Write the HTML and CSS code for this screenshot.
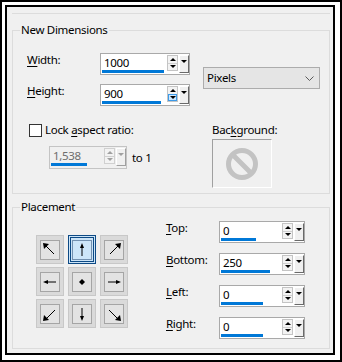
FILE: index.html
```html
<!DOCTYPE html>
<html>
<head>
<meta charset="utf-8">
<link rel="stylesheet" href="styles.css">
</head>
<body>
<div class="frame">
  <div class="dialog">
    <div class="prev"></div>

    <section class="group dims">
      <div class="title">New Dimensions</div>
      <div class="dims-top">
        <div class="size-rows">
          <div class="row">
            <span class="lbl"><u>W</u>idth:</span>
            <div class="spin">
              <div class="field"><span class="val">1000</span><div class="track"><div class="bar" style="width:62px"></div></div></div>
              <div class="arrows"><div class="half"><i class="tri up"></i></div><div class="half"><i class="tri down"></i></div></div>
              <div class="drop"><i class="tri down"></i></div>
            </div>
          </div>
          <div class="row">
            <span class="lbl"><u>H</u>eight:</span>
            <div class="spin">
              <div class="field"><span class="val">900</span><div class="track"><div class="bar" style="width:59px"></div></div></div>
              <div class="arrows"><div class="half"><i class="tri up"></i></div><div class="half hot"><i class="tri down"></i></div></div>
              <div class="drop"><i class="tri down"></i></div>
            </div>
          </div>
        </div>
        <div class="unit-select">
          <span>Pixels</span>
          <svg class="chev" width="9" height="5" viewBox="0 0 9 5"><polyline points="0.5,0.5 4.5,4.5 8.5,0.5" fill="none" stroke="#5a5a5a" stroke-width="1"/></svg>
        </div>
      </div>

      <div class="dims-bottom">
        <div class="lock-col">
          <div class="check-line"><span class="checkbox"></span><span>Lock <u>a</u>spect ratio:</span></div>
          <div class="ratio-line">
            <div class="spin ratio disabled">
              <div class="field"><span class="val">1,538</span><div class="track"><div class="bar" style="width:36px"></div></div></div>
              <div class="arrows"><div class="half"><i class="tri up"></i></div><div class="half"><i class="tri down"></i></div></div>
              <div class="drop"><i class="tri down"></i></div>
            </div>
            <span class="to">to 1</span>
          </div>
        </div>
        <div class="bg-col">
          <div class="bg-label">Bac<u>k</u>ground:</div>
          <div class="bg-box">
            <svg width="34" height="34" viewBox="0 0 34 34">
              <circle cx="17" cy="17" r="13.5" fill="none" stroke="#c3c3c3" stroke-width="5"/>
              <line x1="7.5" y1="7.5" x2="26.5" y2="26.5" stroke="#c3c3c3" stroke-width="5"/>
            </svg>
          </div>
        </div>
      </div>
    </section>

    <section class="group place">
      <div class="title">Placement</div>
      <div class="place-body">
        <div class="pad-grid">
          <div class="pbtn"><div class="sq"><svg viewBox="0 0 18 18"><line x1="4" y1="4" x2="13" y2="13"/><polygon points="2,2 8,3 3,8"/></svg></div></div>
          <div class="pbtn sel"><div class="sq"><svg viewBox="0 0 18 18"><line x1="9" y1="5" x2="9" y2="15"/><polygon points="9,2 7,7 11,7"/></svg></div></div>
          <div class="pbtn"><div class="sq"><svg viewBox="0 0 18 18"><line x1="14" y1="4" x2="5" y2="13"/><polygon points="16,2 10,3 15,8"/></svg></div></div>
          <div class="pbtn"><div class="sq"><svg viewBox="0 0 18 18"><line x1="5" y1="9" x2="15" y2="9"/><polygon points="2,9 7,7 7,11"/></svg></div></div>
          <div class="pbtn"><div class="sq"><svg viewBox="0 0 18 18"><polygon points="9,6 12,9 9,12 6,9"/></svg></div></div>
          <div class="pbtn"><div class="sq"><svg viewBox="0 0 18 18"><line x1="3" y1="9" x2="13" y2="9"/><polygon points="16,9 11,7 11,11"/></svg></div></div>
          <div class="pbtn"><div class="sq"><svg viewBox="0 0 18 18"><line x1="14" y1="5" x2="5" y2="14"/><polygon points="2,16 3,10 8,15"/></svg></div></div>
          <div class="pbtn"><div class="sq"><svg viewBox="0 0 18 18"><line x1="9" y1="3" x2="9" y2="13"/><polygon points="9,16 7,11 11,11"/></svg></div></div>
          <div class="pbtn"><div class="sq"><svg viewBox="0 0 18 18"><line x1="4" y1="5" x2="13" y2="14"/><polygon points="16,16 10,15 15,10"/></svg></div></div>
        </div>

        <div class="margins">
          <span class="lbl2"><u>T</u>op:</span>
          <div class="spin">
            <div class="field"><span class="val">0</span><div class="track"><div class="bar" style="width:35px"></div></div></div>
            <div class="arrows"><div class="half"><i class="tri up"></i></div><div class="half"><i class="tri down"></i></div></div>
            <div class="drop"><i class="tri down"></i></div>
          </div>
          <span class="lbl2"><u>B</u>ottom:</span>
          <div class="spin">
            <div class="field"><span class="val">250</span><div class="track"><div class="bar" style="width:49px"></div></div></div>
            <div class="arrows"><div class="half"><i class="tri up"></i></div><div class="half"><i class="tri down"></i></div></div>
            <div class="drop"><i class="tri down"></i></div>
          </div>
          <span class="lbl2"><u>L</u>eft:</span>
          <div class="spin">
            <div class="field"><span class="val">0</span><div class="track"><div class="bar" style="width:42px"></div></div></div>
            <div class="arrows"><div class="half"><i class="tri up"></i></div><div class="half"><i class="tri down"></i></div></div>
            <div class="drop"><i class="tri down"></i></div>
          </div>
          <span class="lbl2"><u>R</u>ight:</span>
          <div class="spin">
            <div class="field"><span class="val">0</span><div class="track"><div class="bar" style="width:42px"></div></div></div>
            <div class="arrows"><div class="half"><i class="tri up"></i></div><div class="half"><i class="tri down"></i></div></div>
            <div class="drop"><i class="tri down"></i></div>
          </div>
        </div>
      </div>
    </section>
  </div>
</div>
</body>
</html>
```

FILE: styles.css
```css
* { box-sizing: border-box; }
html, body { margin: 0; padding: 0; background: #fff; }
body {
  font-family: "Noto Sans", "Liberation Sans", sans-serif;
  font-size: 11.5px;
  letter-spacing: -0.3px;
  line-height: 16px;
  color: #000;
}
u { text-decoration: underline; text-underline-offset: 2px; text-decoration-thickness: 1px; }

.frame {
  width: 342px;
  height: 362px;
  border: 2px solid #000;
  background: #fff;
  padding: 3px 5px 5px 3px;
}
.dialog {
  width: 330px;
  height: 350px;
  border: 2px solid #000;
  background: #f0f0f0;
}
.prev {
  margin-left: 5px;
  width: 318px;
  height: 7px;
  border-bottom: 1px solid #dcdcdc;
}

.group {
  margin-left: 5px;
  width: 318px;
  border: 1px solid #dcdcdc;
}
.dims { margin-top: 16px; height: 164px; }
.place { margin-top: 13px; height: 142px; }

.title {
  width: fit-content;
  margin: -9px 0 0 7px;
  padding: 0 1px;
  background: #f0f0f0;
  line-height: 16px;
}

/* dimensions */
.dims-top { display: flex; margin-top: 15px; padding-left: 14px; }
.size-rows { display: flex; flex-direction: column; gap: 9px; }
.row { display: flex; align-items: flex-start; }
.lbl { width: 73px; margin-top: -1px; }

.spin {
  display: flex;
  align-items: flex-start;
  width: 90px;
  height: 22px;
  border: 1px solid #a9a9a9;
  background: #fff;
}
.field { flex: 1; padding: 1px 0 0 1px; }
.val { display: block; height: 15px; line-height: 15px; padding-left: 2px; }
.track { height: 3px; width: 100%; }
.bar { height: 3px; background: #0078d7; }

.arrows {
  margin-top: 1px;
  width: 11px;
  height: 16px;
  border: 1px solid #c4c4c4;
  background: #f3f3f3;
  display: flex;
  flex-direction: column;
}
.half { flex: 1; display: flex; align-items: center; justify-content: center; }
.half + .half { border-top: 1px solid #d0d0d0; }
.half.hot { background: #cce8ff; outline: 1px solid #3c9ae8; outline-offset: -1px; }
.drop {
  margin: 1px 0 0 1px;
  width: 10px;
  height: 18px;
  border-top: 1px solid #fff;
  border-left: 1px solid #fff;
  border-right: 1px solid #6a6a6a;
  border-bottom: 1px solid #6a6a6a;
  background: #f0f0f0;
  display: flex;
  justify-content: center;
  padding-top: 4px;
}
.tri { display: block; width: 0; height: 0; border-left: 3px solid transparent; border-right: 3px solid transparent; }
.tri.up { border-bottom: 3px solid #000; }
.tri.down { border-top: 3px solid #000; }

.unit-select {
  margin: 14px 0 0 13px;
  width: 117px;
  height: 22px;
  border: 1px solid #acacac;
  background: #e5e5e5;
  display: flex;
  align-items: center;
  justify-content: space-between;
  padding: 0 5px 0 3px;
}
.chev { display: block; }

.dims-bottom { display: flex; margin-top: 16px; }
.lock-col { width: 199px; padding-left: 16px; }
.check-line { display: flex; align-items: center; height: 16px; gap: 3px; }
.checkbox { width: 13px; height: 13px; border: 1px solid #333; background: #fff; }
.ratio-line { display: flex; align-items: center; margin: 8px 0 0 20px; gap: 5px; }
.spin.ratio { width: 78px; height: 23px; }
.spin.disabled { border-color: #c4c4c4; background: #f0f0f0; }
.spin.disabled .val { color: #6d6d6d; }
.spin.disabled .tri.up { border-bottom-color: #a0a0a0; }
.spin.disabled .tri.down { border-top-color: #a0a0a0; }
.spin.disabled .arrows { border-color: #d0d0d0; }
.spin.disabled .drop { border-right-color: #a0a0a0; border-bottom-color: #a0a0a0; }

.bg-col { display: flex; flex-direction: column; }
.bg-box {
  margin-top: 1px;
  width: 60px;
  height: 49px;
  border-top: 1px solid #a0a0a0;
  border-left: 1px solid #a0a0a0;
  border-right: 1px solid #fff;
  border-bottom: 1px solid #fff;
  display: flex;
  align-items: center;
  justify-content: center;
}
.bg-box svg { display: block; }

/* placement */
.place-body { display: flex; margin-top: 6px; }
.pad-grid {
  margin: 14px 0 0 23px;
  display: grid;
  grid-template-columns: repeat(3, 28px);
  grid-auto-rows: 29px;
  column-gap: 4px;
  row-gap: 3px;
  align-self: flex-start;
}
.pbtn {
  border: 1px solid #c8c8c8;
  background: #dadada;
  display: flex;
  align-items: center;
  justify-content: center;
}
.sq {
  width: 20px;
  height: 20px;
  border: 1px solid #a5a5a5;
  background: #e3e3e3;
}
.sq svg { display: block; width: 18px; height: 18px; }
.sq line { stroke: #000; stroke-width: 1; }
.sq polygon { fill: #000; }
.pbtn.sel { border: 3px double #0d4a85; background: #cce4f7; }
.pbtn.sel .sq { border-color: #7391b0; background: #cde6f9; }

.margins {
  margin-left: 38px;
  display: grid;
  grid-template-columns: 53px 86px;
  grid-auto-rows: 22px;
  row-gap: 10px;
  align-self: flex-start;
}
.lbl2 { margin-top: -1px; }
.margins .spin { width: 86px; }
```
